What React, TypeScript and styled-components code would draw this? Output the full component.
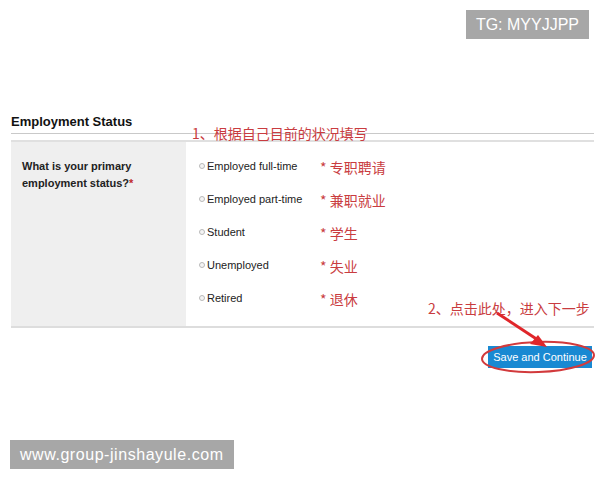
import React from "react";
import styled, { createGlobalStyle } from "styled-components";

const GlobalStyle = createGlobalStyle`
    html, body {
        margin: 0;
        padding: 0;
        background: #ffffff;
    }
    body {
        font-family: "Liberation Sans", Arial, "Noto Sans CJK SC", sans-serif;
    }
`;

const Page = styled.div`
    position: relative;
    width: 600px;
    height: 480px;
    overflow: hidden;
    background: #ffffff;
`;

/* grey watermark tags that sit over the screenshot */
const Tag = styled.div<{ $corner: "top" | "bottom" }>`
    position: absolute;
    ${(p) =>
        p.$corner === "top"
            ? "top: 10px; right: 11px;"
            : "bottom: 11px; left: 10px; letter-spacing: 0.55px;"}
    height: 29px;
    padding: 0 10px;
    display: flex;
    align-items: center;
    background: #a7a7a7;
    color: #ffffff;
    font-family: "Liberation Sans", Arial, sans-serif;
    font-size: 16px;
`;

const Form = styled.section`
    position: relative;
    margin: 114px 6px 0 11px;
`;

const Heading = styled.h2`
    margin: 0;
    padding-bottom: 4px;
    font-size: 13px;
    font-weight: bold;
    color: #111111;
    border-bottom: 1px solid #c9c9c9;
`;

const Gap = styled.div`
    height: 6px;
    border-bottom: 2px solid #e0e0e0;
`;

const Note = styled.span`
    color: #c93c40;
    font-family: "Noto Sans CJK SC", "Liberation Sans", sans-serif;
    font-size: 14px;
    white-space: nowrap;
`;

const HeadNote = styled(Note)`
    position: absolute;
    left: 181px;
    top: 9px;
    line-height: 20px;
`;

const Body = styled.div`
    display: grid;
    grid-template-columns: 175px 1fr;
    border-bottom: 2px solid #dddddd;
`;

const Question = styled.div`
    background: #efefef;
    padding: 16px 10px 0 11px;
    font-size: 11px;
    font-weight: bold;
    line-height: 17px;
    color: #222222;
    min-height: 168px;

    span {
        color: #c0282a;
    }
`;

const Options = styled.div`
    padding: 8px 0 0 13px;
`;

const Row = styled.div`
    display: grid;
    grid-template-columns: 121px auto;
    align-items: center;
    height: 33px;
`;

const Choice = styled.label`
    display: flex;
    align-items: center;
    font-size: 11px;
    color: #222222;
    margin-top: -2px;
`;

const Radio = styled.span`
    width: 4px;
    height: 4px;
    margin-right: 2px;
    border-radius: 50%;
    border: 1px solid #b9b9b9;
    background: #f4f4f4;
`;

const Footer = styled.div`
    position: relative;
    display: flex;
    justify-content: flex-end;
    padding-top: 18px;
`;

const SaveButton = styled.button`
    height: 22px;
    width: 104px;
    margin-right: 2px;
    padding: 0;
    border: none;
    background: #1989d2;
    color: #ffffff;
    font-family: "Liberation Sans", Arial, sans-serif;
    font-size: 11px;
    cursor: pointer;
`;

const StepNote = styled(Note)`
    position: absolute;
    left: 417px;
    top: -30px;
    line-height: 20px;
`;

const Markup = styled.svg`
    position: absolute;
    left: 0;
    top: 0;
    pointer-events: none;
`;

const options = [
    { label: "Employed full-time", note: "专职聘请" },
    { label: "Employed part-time", note: "兼职就业" },
    { label: "Student", note: "学生" },
    { label: "Unemployed", note: "失业" },
    { label: "Retired", note: "退休" },
];

const App: React.FC = () => {
    return (
        <Page>
            <GlobalStyle />
            <Tag $corner="top">TG: MYYJJPP</Tag>

            <Form>
                <Heading>Employment Status</Heading>
                <Gap />
                <HeadNote>1、根据自己目前的状况填写</HeadNote>
                <Body>
                    <Question>
                        What is your primary
                        <br />
                        employment status?<span>*</span>
                    </Question>
                    <Options>
                        {options.map((o) => (
                            <Row key={o.label}>
                                <Choice>
                                    <Radio />
                                    {o.label}
                                </Choice>
                                <Note>* {o.note}</Note>
                            </Row>
                        ))}
                    </Options>
                </Body>
                <Footer>
                    <StepNote>2、点击此处，进入下一步</StepNote>
                    <SaveButton>Save and Continue</SaveButton>
                </Footer>
            </Form>

            {/* hand-drawn circle and arrow pointing at the button */}
            <Markup width="600" height="480" viewBox="0 0 600 480">
                <ellipse
                    cx="538"
                    cy="357"
                    rx="56"
                    ry="15"
                    fill="none"
                    stroke="#d23a3c"
                    strokeWidth="2"
                    transform="rotate(-2 538 357)"
                />
                <path d="M497 313 L538 340" stroke="#e0262a" strokeWidth="3" fill="none" />
                <path d="M547 347 L530 344 L538 335 Z" fill="#e0262a" />
            </Markup>

            <Tag $corner="bottom">www.group-jinshayule.com</Tag>
        </Page>
    );
};

export default App;
